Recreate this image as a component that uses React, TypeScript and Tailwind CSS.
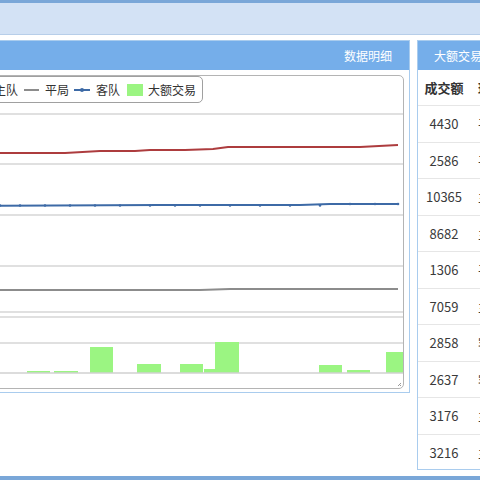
import React from "react";

const redLine = [
  [-56, 153], [65, 153], [100, 151], [135, 151], [150, 150], [185, 150],
  [213, 149], [228, 147], [360, 147], [398, 145],
];
const blueLine = [[-56, 206], [160, 205], [300, 205], [330, 204], [398, 204]];
const greyLine = [[-56, 290], [200, 290], [230, 289], [398, 289]];
const gridY = [114, 164, 215, 266, 312, 317, 343];

const bars = [
  { x: 204, w: 12, top: 369 },
  { x: 27, w: 23, top: 371 },
  { x: 54, w: 24, top: 371 },
  { x: 90, w: 23, top: 347 },
  { x: 137, w: 24, top: 364 },
  { x: 180, w: 23, top: 364 },
  { x: 215, w: 24, top: 342 },
  { x: 319, w: 23, top: 365 },
  { x: 347, w: 23, top: 370 },
  { x: 386, w: 17, top: 352 },
];

const trades = [
  { amount: "4430", team: "平局" },
  { amount: "2586", team: "平局" },
  { amount: "10365", team: "主队" },
  { amount: "8682", team: "主队" },
  { amount: "1306", team: "平局" },
  { amount: "7059", team: "主队" },
  { amount: "2858", team: "客队" },
  { amount: "2637", team: "客队" },
  { amount: "3176", team: "主队" },
  { amount: "3216", team: "主队" },
];

const pts = (p: number[][]) => p.map(([x, y]) => `${x},${y}`).join(" ");

function Chart() {
  return (
    <div className="relative h-[314px] w-[460px] rounded-[5px] border border-[#b4b4b4] bg-white">
      <svg width="458" height="312" className="block">
        <g transform="translate(55,-76)">
          {gridY.map((y) => (
            <line key={y} x1={-56} x2={403} y1={y} y2={y} stroke="#d6d6d6" strokeWidth="1.6" />
          ))}
          <polyline points={pts(redLine)} fill="none" stroke="#ad3c3e" strokeWidth="2" />
          <polyline points={pts(blueLine)} fill="none" stroke="#3d6aa6" strokeWidth="2" />
          {[-40, 0, 20, 45, 70, 95, 120, 150, 175, 200, 230, 260, 290, 320, 350, 375, 398].map((x) => (
            <circle key={x} cx={x} cy={x > 320 ? 204 : 205.5} r="1.3" fill="#3d6aa6" />
          ))}
          <polyline points={pts(greyLine)} fill="none" stroke="#8c8c8c" strokeWidth="2" />
          {bars.map((b) => (
            <rect key={b.x} x={b.x} y={b.top} width={b.w} height={373 - b.top} fill="#9bf582" />
          ))}
          <line x1={-56} x2={403} y1={373} y2={373} stroke="#d0d0d0" strokeWidth="1.6" />
          <path d="M398 386 L401 383 M400 386 L401 385" stroke="#9a9a9a" strokeWidth="1" />
        </g>
      </svg>
      <div className="absolute left-[19px] top-[0px] flex h-[27px] items-center rounded-[5px] border border-[#a0a0a0] bg-white pl-[8px] pr-[6px] text-[12px] text-[#333]">
        <span className="mr-[6px] h-[2px] w-[15px] bg-[#ad3c3e]" />
        <span className="mr-[6px] w-[24px] whitespace-nowrap">主队</span>
        <span className="mr-[6px] h-[2px] w-[15px] bg-[#8c8c8c]" />
        <span className="mr-[5px] w-[24px] whitespace-nowrap">平局</span>
        <span className="relative mr-[6px] flex h-[2px] w-[16px] items-center justify-center bg-[#3d6aa6]">
          <span className="h-[4px] w-[4px] rounded-full bg-[#3d6aa6]" />
        </span>
        <span className="mr-[7px] w-[24px] whitespace-nowrap">客队</span>
        <span className="mr-[5px] h-[12px] w-[16px] bg-[#9bf582]" />
        <span className="whitespace-nowrap">大额交易</span>
      </div>
    </div>
  );
}

export default function App() {
  return (
    <div className="flex h-[480px] w-[480px] flex-col overflow-hidden bg-white font-['Noto_Sans_CJK_SC','Microsoft_YaHei',sans-serif]">
      <div className="h-[3px] flex-none bg-[#7aa7d8]" />
      <div className="h-[32px] flex-none border-b border-[#b7cee9] bg-[#d3e2f5]" />

      <div className="-ml-[60px] flex min-h-0 flex-1 items-start gap-[7px] pt-[5px]">
        {/* 数据明细 */}
        <div className="h-[353px] w-[470px] flex-none border border-[#a9ccee] bg-white">
          <div className="flex h-[29px] items-center justify-end bg-[#75aeea] pr-[17px] text-[12px] text-white">
            数据明细
          </div>
          <div className="pl-[3px] pr-[5px] pt-[5px]">
            <Chart />
          </div>
        </div>

        {/* 大额交易 */}
        <div className="h-[430px] w-[120px] flex-none overflow-hidden border border-[#a9ccee] bg-white">
          <div className="flex h-[29px] items-center bg-[#75aeea] pl-[16px] text-[12px] text-white whitespace-nowrap">
            大额交易
          </div>
          <div className="flex h-[36px] items-center border-b border-[#e6e6e6] text-[13px] font-semibold text-[#333]">
            <span className="w-[52px] flex-none text-center">成交额</span>
            <span className="pl-[8px] whitespace-nowrap">球队</span>
          </div>
          {trades.map((t) => (
            <div
              key={t.amount}
              className="flex h-[36.5px] items-center border-b border-[#e6e6e6] text-[13px] text-[#3a3a3a]"
            >
              <span className="w-[52px] flex-none text-center">{t.amount}</span>
              <span className="pl-[8px] whitespace-nowrap">{t.team}</span>
            </div>
          ))}
        </div>
      </div>

      <div className="h-[4px] flex-none bg-[#7aa7d8]" />
    </div>
  );
}
